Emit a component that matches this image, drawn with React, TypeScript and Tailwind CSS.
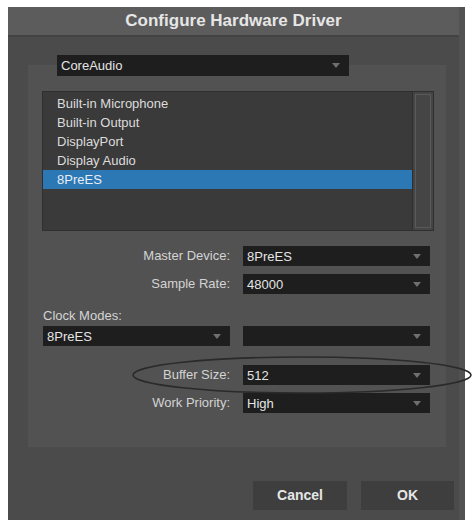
import React from "react";

const FONT = { fontFamily: '"Liberation Sans", Arial, Helvetica, sans-serif' };

function Arrow() {
  return (
    <svg width="8" height="5" viewBox="0 0 8 5" className="shrink-0">
      <path d="M0 0 L8 0 L4 5 Z" fill="#6f6f6f" />
    </svg>
  );
}

function Dropdown({ value, className = "" }: { value: string; className?: string }) {
  return (
    <div
      className={`flex items-center justify-between bg-[#1e1e1e] pl-[4px] pr-[9px] text-[13px] text-[#e4e4e4] ${className}`}
    >
      <span className="leading-none">{value}</span>
      <Arrow />
    </div>
  );
}

function Label({ text }: { text: string }) {
  return (
    <div className="flex h-[20px] items-center justify-end text-[13px] text-[#d4d4d4]">{text}</div>
  );
}

export default function App() {
  const items = ["Built-in Microphone", "Built-in Output", "DisplayPort", "Display Audio", "8PreES"];
  return (
    <div className="relative h-[520px] w-[473px] overflow-hidden bg-white pl-[8px] pt-[7px]" style={FONT}>
      <div className="flex h-[513px] w-[457px] flex-col bg-[#4b4b4b] border-r-[6px] border-[#525252]">
        <div className="flex h-[30px] items-center justify-center border-b-[2px] border-[#424242] bg-[#5c5c5c] text-[17px] font-bold text-[#e6e6e6]">
          Configure Hardware Driver
        </div>
        <div className="flex flex-col pl-[20px]">
          <div className="mt-[28px] flex h-[382px] w-[418px] flex-col bg-[#525252] pl-[15px]">
            <Dropdown value="CoreAudio" className="-mt-[10px] ml-[14px] h-[21px] w-[292px]" />
            <div className="mt-[15px] -ml-[1px] flex h-[140px] w-[392px] border border-[#2f2f2f] bg-[#3a3a3a]">
              <div className="flex flex-1 flex-col pt-[2px]">
                {items.map((it, i) => (
                  <div
                    key={it}
                    className={`flex h-[19px] items-center pl-[14px] text-[13px] ${
                      i === 4 ? "bg-[#2c78b4] text-[#e8eef5]" : "text-[#dcdcdc]"
                    }`}
                  >
                    {it}
                  </div>
                ))}
              </div>
              <div className="w-[21px] border-l border-[#2e2e2e] bg-[#454545] p-[2px]">
                <div className="h-full border border-[#5a5a5a]" />
              </div>
            </div>
            <div className="mt-[15px] grid w-[387px] grid-cols-[187px_187px] gap-x-[13px] gap-y-[8px]">
              <Label text="Master Device:" />
              <Dropdown value="8PreES" className="h-[20px]" />
              <Label text="Sample Rate:" />
              <Dropdown value="48000" className="h-[20px]" />
            </div>
            <div className="mt-[14px] text-[13px] leading-[15px] text-[#d4d4d4]">Clock Modes:</div>
            <div className="mt-[3px] grid w-[387px] grid-cols-[187px_187px] gap-x-[13px]">
              <Dropdown value="8PreES" className="h-[20px]" />
              <Dropdown value="" className="h-[20px]" />
            </div>
            <div className="mt-[19px] grid w-[387px] grid-cols-[187px_187px] gap-x-[13px] gap-y-[8px]">
              <Label text="Buffer Size:" />
              <Dropdown value="512" className="h-[20px]" />
              <Label text="Work Priority:" />
              <Dropdown value="High" className="h-[20px]" />
            </div>
          </div>
        </div>
        <div className="mt-[34px] flex justify-end gap-[14px] pr-[5px]">
          <button className="flex h-[29px] w-[94px] items-center justify-center bg-[#3e3e3e] text-[14px] font-bold text-[#e6e6e6]">
            Cancel
          </button>
          <button className="flex h-[29px] w-[93px] items-center justify-center bg-[#3e3e3e] text-[14px] font-bold text-[#e6e6e6]">
            OK
          </button>
        </div>
      </div>
      <svg className="pointer-events-none absolute left-0 top-0" width="473" height="520">
        <ellipse cx="302" cy="375" rx="169" ry="18" fill="none" stroke="#2a2a2a" strokeWidth="1.6" />
      </svg>
    </div>
  );
}
